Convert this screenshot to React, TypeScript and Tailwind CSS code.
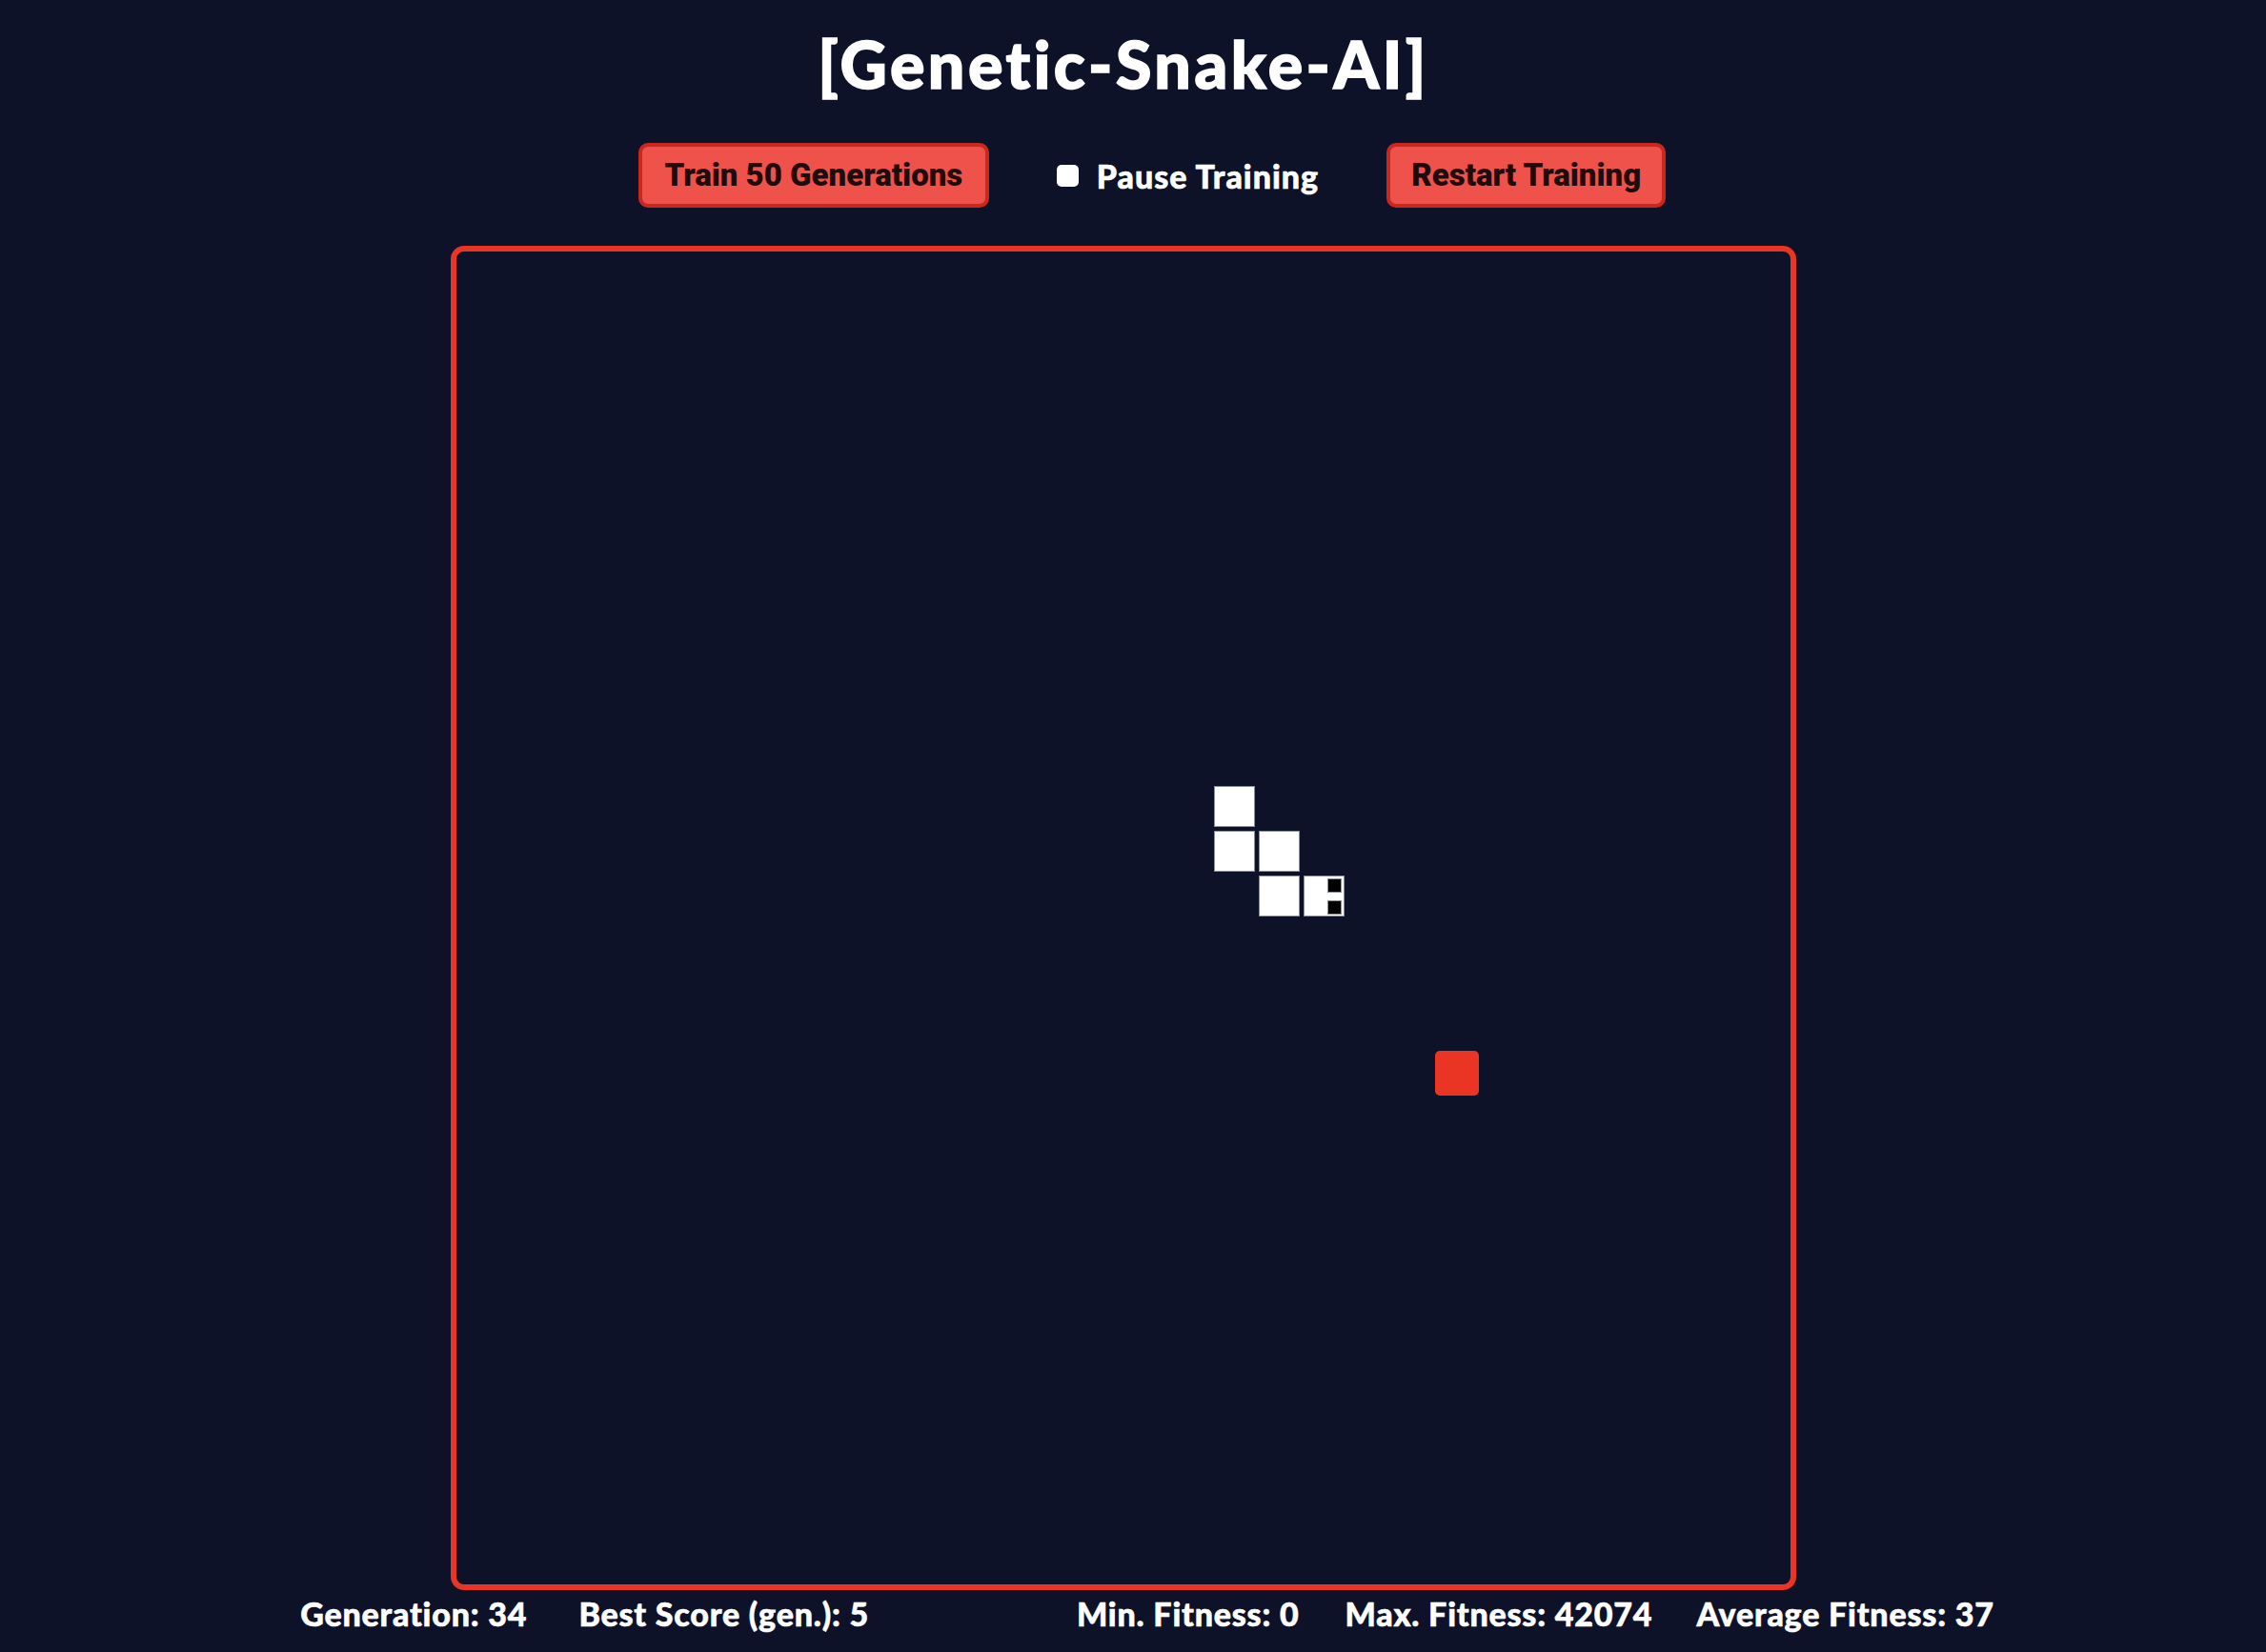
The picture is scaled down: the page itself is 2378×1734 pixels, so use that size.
import React from 'react';

const snake = [
  { x: 795, y: 561 },
  { x: 795, y: 608 },
  { x: 842, y: 608 },
  { x: 842, y: 655 },
];
const head = { x: 889, y: 655 };

const stats = [
  'Generation: 34',
  'Best Score (gen.): 5',
  'Min. Fitness: 0',
  'Max. Fitness: 42074',
  'Average Fitness: 37',
];

export default function App() {
  const [paused, setPaused] = React.useState(false);

  return (
    <div className="min-h-screen w-full bg-[#0d1229] text-white">
      <main className="flex w-[2358px] flex-col items-center">
        <h1 className="mt-[33px] font-['Lato',sans-serif] text-[68px] font-black leading-[68px] tracking-[3.5px] text-white [-webkit-text-stroke:1.5px_white]">
          [Genetic-Snake-AI]
        </h1>

        <div className="ml-[60px] mt-[49px] flex items-center gap-[71px]">
          <button
            type="button"
            className="h-[68px] w-[368px] rounded-[10px] border-[4px] border-[#c9281f] bg-[#ee524a] font-['Roboto',sans-serif] text-[33px] font-black text-[#1f0b0b]"
          >
            Train 50 Generations
          </button>
          <label className="flex items-center gap-[19px] font-['Lato',sans-serif] text-[34px] font-black tracking-[1px] text-white [-webkit-text-stroke:0.6px_white]">
            <span
              onClick={() => setPaused((p) => !p)}
              className="h-[23px] w-[23px] rounded-[5px] bg-white"
            />
            Pause Training
          </label>
          <button
            type="button"
            className="h-[68px] w-[293px] rounded-[10px] border-[4px] border-[#c9281f] bg-[#ee524a] font-['Roboto',sans-serif] text-[33px] font-black text-[#1f0b0b]"
          >
            Restart Training
          </button>
        </div>

        <div className="mt-[40px] h-[1411px] w-[1412px] rounded-[14px] border-[6px] border-[#ea3424]">
          <div className="relative h-full w-full">
            {snake.map((c, i) => (
              <div
                key={i}
                className="absolute h-[43px] w-[43px] border border-[#8a8f9c] bg-white"
                style={{ left: c.x, top: c.y }}
              />
            ))}
            <div
              className="absolute h-[43px] w-[43px] border border-[#8a8f9c] bg-white"
              style={{ left: head.x, top: head.y }}
            >
              <div className="absolute left-[24px] top-[2px] h-[15px] w-[15px] border border-[#8a8f9c] bg-black" />
              <div className="absolute left-[24px] top-[25px] h-[15px] w-[15px] border border-[#8a8f9c] bg-black" />
            </div>
            <div className="absolute left-[1027px] top-[839px] h-[47px] w-[46px] rounded-[5px] bg-[#ea3424]" />
          </div>
        </div>

        <div className="ml-[50px] mt-[5px] flex items-center font-['Lato',sans-serif] text-[34px] font-black leading-[40px] tracking-[0.8px] text-white [-webkit-text-stroke:0.6px_white]">
          <span>{stats[0]}</span>
          <span className="ml-[54px]">{stats[1]}</span>
          <span className="ml-[218px]">{stats[2]}</span>
          <span className="ml-[48px]">{stats[3]}</span>
          <span className="ml-[46px]">{stats[4]}</span>
        </div>
      </main>
    </div>
  );
}
